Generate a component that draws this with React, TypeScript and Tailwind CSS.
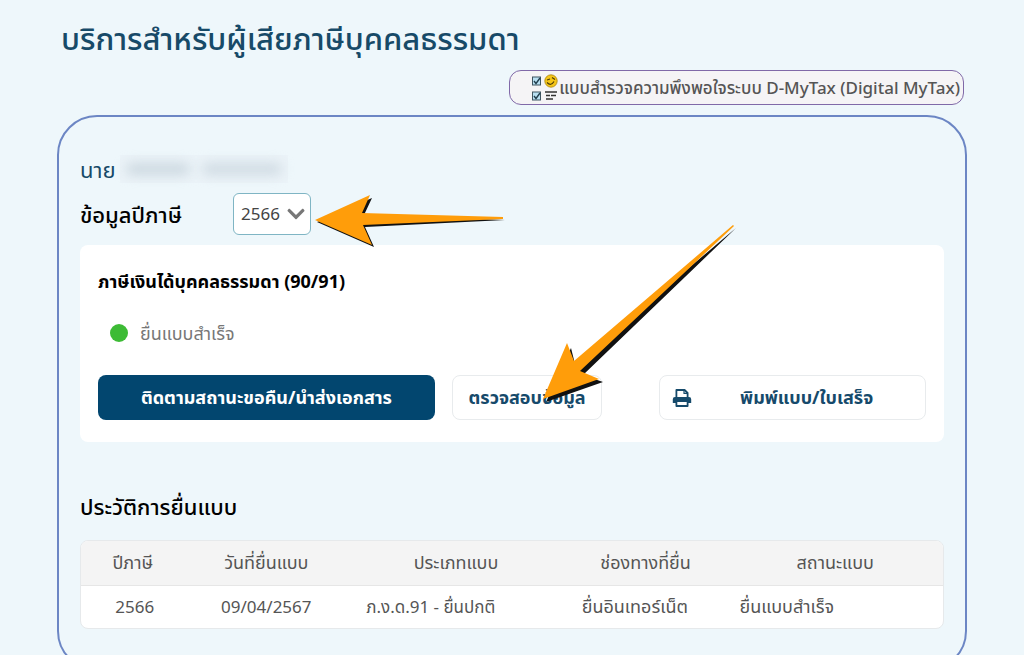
import React from "react";
import { useState } from "react";
import { FaChevronDown } from "react-icons/fa";

const historyRows = [
  {
    year: "2566",
    date: "09/04/2567",
    type: "ภ.ง.ด.91 - ยื่นปกติ",
    channel: "ยื่นอินเทอร์เน็ต",
    status: "ยื่นแบบสำเร็จ",
  },
];

function SurveyIcon() {
  return (
    <svg width="28" height="28" viewBox="0 0 28 28" className="shrink-0" aria-hidden="true">
      {[3, 18].map((y) => (
        <g key={y}>
          <rect x="1.5" y={y} width="8" height="8" fill="#b9e0f2" stroke="#3f5560" />
          <path
            d={`M3 ${y + 4}l2 2.5 4-5.5`}
            fill="none"
            stroke="#23404f"
            strokeWidth="1.4"
          />
        </g>
      ))}
      <circle cx="20" cy="7" r="6.2" fill="#f5c518" stroke="#a8830f" strokeWidth="0.8" />
      <path
        d="M16 6l3-1M21 3.5l3 2M16 8.5q4 4 7-1"
        fill="none"
        stroke="#4b3a08"
        strokeWidth="1.2"
      />
      <path
        d="M14 18h12M15 21.5h4M20 21.5h5M15 25h7"
        fill="none"
        stroke="#333"
        strokeWidth="1.5"
      />
    </svg>
  );
}

function PrintIcon() {
  return (
    <svg
      className="shrink-0"
      width="20"
      height="20"
      viewBox="0 0 20 20"
      fill="none"
      stroke="currentColor"
      strokeWidth="1.8"
      strokeLinejoin="round"
      aria-hidden="true"
    >
      <path d="M4.4 10V2h8.2l3 3v5" />
      <path d="M12 2v3.4h3.6" strokeWidth="1.2" />
      <path
        d="M3 9h14a2.2 2.2 0 0 1 2.2 2.2V15H.8v-3.800A2.200 2.200 0 0 1 3 9z"
        fill="currentColor"
        stroke="none"
      />
      <path d="M4.400 13.200h11.200V18H4.400z" fill="#fff" />
    </svg>
  );
}

function YearSelect() {
  const [year, setYear] = useState("2566");

  return (
    <div className="relative w-[78px]">
      <select
        id="tax-year"
        value={year}
        onChange={(e) => setYear(e.target.value)}
        className="h-[42px] w-full appearance-none rounded-md border border-[#7fb5c4] bg-white pl-[7px] text-[17px] text-[#444]"
      >
        <option>2566</option>
        <option>2565</option>
      </select>
      <FaChevronDown className="pointer-events-none absolute right-[5px] top-[11px] size-5 text-[#777]" />
      {/* arrow to the year box */}
      <svg
        className="pointer-events-none absolute left-[82px] top-0 z-10"
        width="192"
        height="56"
        viewBox="0 0 192 56"
        aria-hidden="true"
      >
        <path d="M2 29L57 5L49 22L190 27L50 34L59 54Z" fill="#111" />
        <path d="M0 27L55 2L47 20L188 24L188 26L48 32L57 52Z" fill="#ff9d0a" />
      </svg>
    </div>
  );
}

function TaxCard() {
  return (
    <section className="rounded-lg bg-white px-[18px] py-[22px]">
      <h2 className="text-[18px] leading-7 font-bold text-black">
        ภาษีเงินได้บุคคลธรรมดา (90/91)
      </h2>
      <div className="mt-6 flex items-center gap-3 pl-3">
        <span className="size-[18px] rounded-full bg-[#3dbb35]" />
        <span className="text-[18px] leading-7 text-[#777]">ยื่นแบบสำเร็จ</span>
      </div>
      <div className="mt-7 flex text-[18px] font-bold">
        <div className="flex-[336]">
          <button className="h-[45px] w-full rounded-lg bg-[#02466f] text-white">
            ติดตามสถานะขอคืน/นำส่งเอกสาร
          </button>
        </div>
        <div className="relative ml-[17px] flex-[150]">
          <button className="h-[45px] w-full rounded-lg border border-[#e8ebed] bg-white text-[#164a6b]">
            ตรวจสอบข้อมูล
          </button>
          {/* arrow to the check button */}
          <svg
            className="pointer-events-none absolute bottom-[18px] left-[91px] z-10"
            width="196"
            height="178"
            viewBox="0 0 196 178"
            aria-hidden="true"
          >
            <path d="M3 178L28 124L32 140L193 4L40 151L60 158Z" fill="#111" />
            <path d="M0 175L24 119L31 137L190 1L191 2L37 147L56 155Z" fill="#ff9d0a" />
          </svg>
        </div>
        <div className="ml-[57px] flex-[266]">
          <button className="flex h-[45px] w-full items-center rounded-lg border border-[#e8ebed] bg-white px-3 text-[#164a6b]">
            <PrintIcon />
            <span className="flex-1 pl-2">พิมพ์แบบ/ใบเสร็จ</span>
          </button>
        </div>
      </div>
    </section>
  );
}

function HistoryTable() {
  return (
    <div className="overflow-hidden rounded-lg border border-[#e6e9eb] bg-white">
      <table className="w-full table-fixed text-[17px] text-[#555]">
        <colgroup>
          <col className="w-[12%]" />
          <col className="w-[19%]" />
          <col className="w-[25%]" />
          <col className="w-[19%]" />
          <col className="w-[25%]" />
        </colgroup>
        <thead className="bg-[#f4f4f4] text-[18px]">
          <tr className="h-[44px] border-b border-[#e6e6e6]">
            <th className="font-normal">ปีภาษี</th>
            <th className="font-normal">วันที่ยื่นแบบ</th>
            <th className="font-normal">ประเภทแบบ</th>
            <th className="font-normal">ช่องทางที่ยื่น</th>
            <th className="font-normal">สถานะแบบ</th>
          </tr>
        </thead>
        <tbody>
          {historyRows.map((row) => (
            <tr key={row.date} className="h-[43px]">
              <td className="pl-1 text-center">{row.year}</td>
              <td className="text-center">{row.date}</td>
              <td className="pl-[18px]">{row.type}</td>
              <td className="pl-[18px] text-[18px]">{row.channel}</td>
              <td className="pl-3 text-[18px]">{row.status}</td>
            </tr>
          ))}
        </tbody>
      </table>
    </div>
  );
}

function App() {
  return (
    <div className="min-h-screen bg-[#eef7fb] pr-[57px] pl-[57px] pt-[18px] pb-4 font-['Noto_Sans','Noto_Sans_Thai',sans-serif]">
      <h1 className="pl-1 text-[31px] leading-10 font-medium text-[#174a68]">
        บริการสำหรับผู้เสียภาษีบุคคลธรรมดา
      </h1>
      <div className="mt-3 flex justify-end pr-[3px]">
        <a
          href="#survey"
          className="flex h-[35px] w-[455px] items-center justify-end rounded-xl border border-[#8069a8] bg-[#f5f4f6] pr-[3px] text-[17px] font-medium whitespace-nowrap text-[#555]"
        >
          <SurveyIcon />
          แบบสำรวจความพึงพอใจระบบ D-MyTax (Digital MyTax)
        </a>
      </div>

      <main className="mt-[10px] rounded-[40px] border-2 border-[#6c86c4] px-[21px] pt-[38px] pb-10">
        <div className="flex items-center gap-1 text-[22px] leading-7 text-[#174a68]">
          <span>นาย</span>
          <span className="flex h-7 w-[168px] items-center justify-around bg-[#ebf3f8]">
            <span className="h-3 w-16 rounded-full bg-[#ccd8e0] blur-[6px]" />
            <span className="h-3 w-20 rounded-full bg-[#d0dbe3] blur-[6px]" />
          </span>
        </div>
        <div className="mt-[10px] flex items-center">
          <label
            htmlFor="tax-year"
            className="w-[153px] text-[22px] leading-8 font-medium text-black"
          >
            ข้อมูลปีภาษี
          </label>
          <YearSelect />
        </div>
        <div className="mt-[10px]">
          <TaxCard />
        </div>
        <h2 className="mt-12 mb-[18px] text-[22px] leading-8 font-medium text-black">
          ประวัติการยื่นแบบ
        </h2>
        <HistoryTable />
      </main>
    </div>
  );
}

export default App;
